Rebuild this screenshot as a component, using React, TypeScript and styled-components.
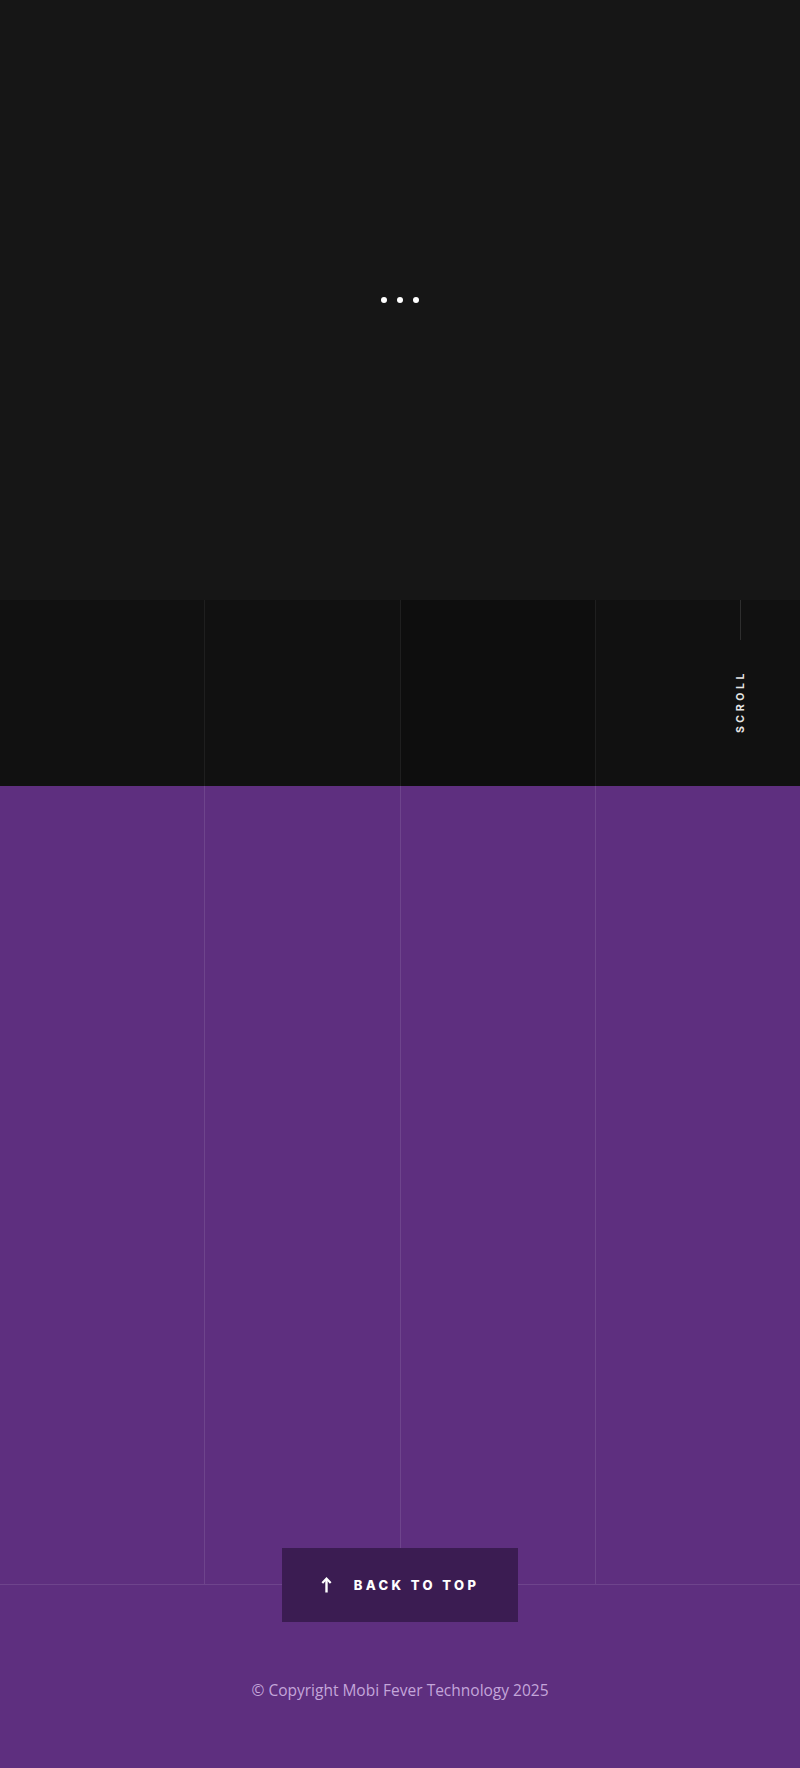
import React from "react";
import styled, { createGlobalStyle } from "styled-components";

const Global = createGlobalStyle`
  html, body { margin: 0; padding: 0; background: #5e2f7f; }
  body { font-family: "Open Sans", "Liberation Sans", sans-serif; }
  * { box-sizing: border-box; }
`;

const Page = styled.div`
  width: 800px;
  min-height: 1768px;
  display: flex;
  flex-direction: column;
  position: relative;
`;

const Hero = styled.section`
  height: 600px;
  background: #161616;
  display: flex;
  align-items: center;
  justify-content: center;
`;

const Loader = styled.div`
  display: flex;
  gap: 10px;
`;

const Dot = styled.span`
  width: 6px;
  height: 6px;
  border-radius: 50%;
  background: #ffffff;
`;

const Band = styled.section`
  height: 186px;
  display: grid;
  grid-template-columns: 205px 196px 195px 1fr;
  background: #111111;
  position: relative;
`;

const Column = styled.div<{ $dark?: boolean; $line?: string; $last?: boolean }>`
  background: ${(p) => (p.$dark ? "#0e0e0e" : "transparent")};
  border-right: ${(p) => (p.$last ? "none" : `1px solid ${p.$line}`)};
`;

const ScrollCue = styled.div`
  position: absolute;
  top: 0;
  left: 733px;
  width: 14px;
  display: flex;
  flex-direction: column;
  align-items: center;
`;

const CueLine = styled.span`
  width: 1px;
  height: 40px;
  background: #2e2e2e;
`;

const CueText = styled.span`
  margin-top: 30px;
  writing-mode: vertical-rl;
  transform: rotate(180deg);
  font-family: "Inter", "Liberation Sans", sans-serif;
  font-weight: 700;
  font-size: 10.5px;
  letter-spacing: 3.6px;
  color: #e6e6e6;
`;

const Footer = styled.footer`
  background: #5e2f7f;
  flex: 1;
  display: flex;
  flex-direction: column;
`;

const FooterGrid = styled.div`
  height: 799px;
  display: grid;
  grid-template-columns: 205px 196px 195px 1fr;
  border-bottom: 1px solid rgba(255, 255, 255, 0.1);
`;

const ButtonRow = styled.div`
  display: flex;
  justify-content: center;
  margin-top: -37px;
`;

const TopButton = styled.button`
  width: 236px;
  height: 74px;
  border: none;
  background: #3b1c52;
  color: #ffffff;
  display: flex;
  align-items: center;
  justify-content: center;
  gap: 22px;
  padding: 0 0 0 0;
  cursor: pointer;
  font-family: "Inter", "Liberation Sans", sans-serif;
  font-weight: 800;
  font-size: 13px;
  letter-spacing: 3.4px;
`;

const Copyright = styled.p`
  margin: 57px 0 0;
  text-align: center;
  font-family: "Open Sans", "Liberation Sans", sans-serif;
  font-size: 15.5px;
  color: #c4a6da;
`;

const ArrowUp = () => (
  <svg width="11" height="16" viewBox="0 0 11 16" fill="none">
    <path d="M5.5 15.5V2" stroke="#fff" strokeWidth="2.4" />
    <path d="M1.3 6L5.5 1.6L9.7 6" stroke="#fff" strokeWidth="2.2" fill="none" />
  </svg>
);

const bandLine = "#1f1f1f";
const footLine = "rgba(255,255,255,0.1)";

export default function App() {
  return (
    <Page>
      <Global />
      <Hero>
        <Loader>
          <Dot />
          <Dot />
          <Dot />
        </Loader>
      </Hero>
      <Band>
        <Column $line={bandLine} />
        <Column $line={bandLine} />
        <Column $line={bandLine} $dark />
        <Column $last />
        <ScrollCue>
          <CueLine />
          <CueText>SCROLL</CueText>
        </ScrollCue>
      </Band>
      <Footer>
        <FooterGrid>
          <Column $line={footLine} />
          <Column $line={footLine} />
          <Column $line={footLine} />
          <Column $last />
        </FooterGrid>
        <ButtonRow>
          <TopButton>
            <ArrowUp />
            <span>BACK TO TOP</span>
          </TopButton>
        </ButtonRow>
        <Copyright>© Copyright Mobi Fever Technology 2025</Copyright>
      </Footer>
    </Page>
  );
}
